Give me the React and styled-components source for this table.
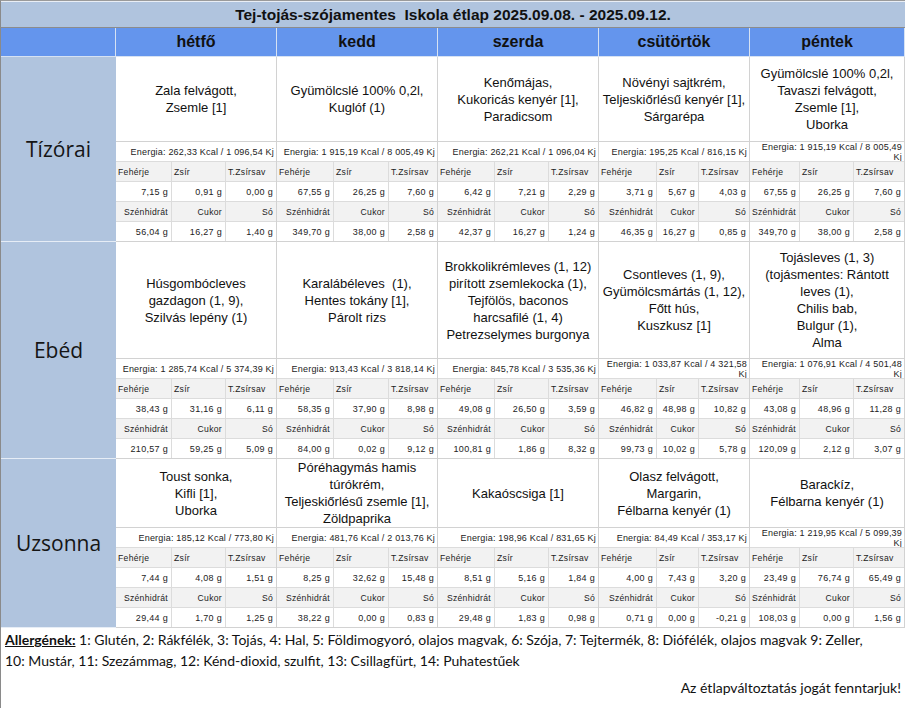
import React from "react";
import styled, { createGlobalStyle } from "styled-components";

const GlobalStyle = createGlobalStyle`
  html, body {
    margin: 0;
    padding: 0;
    background: #ffffff;
  }
  body {
    font-family: "Liberation Sans", Arial, sans-serif;
    color: #111;
  }
`;

const Page = styled.div`
  width: 905px;
  height: 708px;
  box-sizing: border-box;
  border-left: 1px solid #8a8a8a;
  border-top: 1px solid #9a9a9a;
  overflow: hidden;
`;

const Title = styled.div`
  height: 25px;
  line-height: 25px;
  border-top: 1px solid #e9eef5;
  border-bottom: 1px solid #8c8c8c;
  background: #b0c4de;
  text-align: center;
  font-weight: bold;
  font-size: 15.5px;
  white-space: pre;
`;

const Table = styled.div`
  display: grid;
  grid-template-columns: 115px 161px 161px 161px 151px 155px;
`;

const Corner = styled.div`
  height: 28px;
  background: #6495ed;
  border-right: 1px solid #d6e2f3;
  border-bottom: 1px solid #d6e2f3;
`;

const DayHead = styled.div`
  height: 28px;
  display: flex;
  align-items: center;
  justify-content: center;
  background: #6495ed;
  border-right: 1px solid #d6e2f3;
  border-bottom: 1px solid #d6e2f3;
  font-weight: bold;
  font-size: 16px;
  color: #111;
`;

const MealLabel = styled.div`
  display: flex;
  align-items: center;
  justify-content: center;
  background: #b0c4de;
  border-bottom: 1px solid #e6edf6;
  font-family: "Open Sans", "Noto Sans", sans-serif;
  font-size: 21px;
  color: #151515;
`;

const DayCell = styled.div`
  display: flex;
  flex-direction: column;
  border-right: 1px solid #d2d2d2;
  border-bottom: 1px solid #d2d2d2;
  background: #fff;
`;

const MealText = styled.div`
  height: ${(p) => p.$h}px;
  display: flex;
  align-items: center;
  justify-content: center;
  text-align: center;
  font-size: 13px;
  line-height: 17px;
  padding: 0 2px;
  white-space: pre;
  overflow: hidden;
`;

const Nutri = styled.div`
  display: grid;
  grid-template-columns: ${(p) => p.$cols};
  grid-auto-rows: 20px;
`;

const Energy = styled.div`
  grid-column: 1 / -1;
  box-sizing: border-box;
  border-top: 1px solid #d2d2d2;
  display: flex;
  align-items: center;
  justify-content: flex-end;
  padding: 0 2px 0 3px;
  overflow: hidden;
  font-size: 9px;
  letter-spacing: 0.2px;
  line-height: 10px;
  text-align: right;
  white-space: nowrap;
  color: #222;
`;

const NCell = styled.div`
  box-sizing: border-box;
  border-top: 1px solid #dcdcdc;
  border-right: ${(p) => (p.$last ? "none" : "1px solid #dcdcdc")};
  background: ${(p) => (p.$label ? "#f2f2f2" : "#ffffff")};
  display: flex;
  align-items: center;
  justify-content: ${(p) => (p.$left ? "flex-start" : "flex-end")};
  padding: 0 3px 0 2px;
  font-size: ${(p) => (p.$label ? "8.6px" : "9px")};
  letter-spacing: 0.3px;
  white-space: nowrap;
  color: #222;
`;

const Footer = styled.div`
  padding: 1px 4px 0 4px;
  font-family: "Lato", "Open Sans", sans-serif;
  font-size: 14px;
  line-height: 21px;
  color: #111;
`;

const AllergenHead = styled.span`
  font-weight: bold;
  text-decoration: underline;
`;

const Notice = styled.div`
  margin-top: 6px;
  text-align: right;
`;

const days = [
  { name: "hétfő", cols: "56px 54px 1fr" },
  { name: "kedd", cols: "57px 55px 1fr" },
  { name: "szerda", cols: "57px 54px 1fr" },
  { name: "csütörtök", cols: "58px 42px 1fr" },
  { name: "péntek", cols: "50px 54px 1fr" },
];

// wrap: the energy line does not fit its column and breaks before "Kj"
const meals = [
  {
    label: "Tízórai",
    h: 84,
    items: [
      {
        lines: ["Zala felvágott,", "Zsemle [1]"],
        energy: "Energia: 262,33 Kcal / 1 096,54 Kj",
        a: ["7,15 g", "0,91 g", "0,00 g"],
        b: ["56,04 g", "16,27 g", "1,40 g"],
      },
      {
        lines: ["Gyümölcslé 100% 0,2l,", "Kuglóf (1)"],
        energy: "Energia: 1 915,19 Kcal / 8 005,49 Kj",
        a: ["67,55 g", "26,25 g", "7,60 g"],
        b: ["349,70 g", "38,00 g", "2,58 g"],
      },
      {
        lines: ["Kenőmájas,", "Kukoricás kenyér [1],", "Paradicsom"],
        energy: "Energia: 262,21 Kcal / 1 096,04 Kj",
        a: ["6,42 g", "7,21 g", "2,29 g"],
        b: ["42,37 g", "16,27 g", "1,24 g"],
      },
      {
        lines: ["Növényi sajtkrém,", "Teljeskiőrlésű kenyér [1],", "Sárgarépa"],
        energy: "Energia: 195,25 Kcal / 816,15 Kj",
        a: ["3,71 g", "5,67 g", "4,03 g"],
        b: ["46,35 g", "16,27 g", "0,85 g"],
      },
      {
        lines: ["Gyümölcslé 100% 0,2l,", "Tavaszi felvágott,", "Zsemle [1],", "Uborka"],
        energy: "Energia: 1 915,19 Kcal / 8 005,49 Kj",
        wrap: true,
        a: ["67,55 g", "26,25 g", "7,60 g"],
        b: ["349,70 g", "38,00 g", "2,58 g"],
      },
    ],
  },
  {
    label: "Ebéd",
    h: 116,
    items: [
      {
        lines: ["Húsgombócleves", "gazdagon (1, 9),", "Szilvás lepény (1)"],
        energy: "Energia: 1 285,74 Kcal / 5 374,39 Kj",
        a: ["38,43 g", "31,16 g", "6,11 g"],
        b: ["210,57 g", "59,25 g", "5,09 g"],
      },
      {
        lines: ["Karalábéleves  (1),", "Hentes tokány [1],", "Párolt rizs"],
        energy: "Energia: 913,43 Kcal / 3 818,14 Kj",
        a: ["58,35 g", "37,90 g", "8,98 g"],
        b: ["84,00 g", "0,02 g", "9,12 g"],
      },
      {
        lines: [
          "Brokkolikrémleves (1, 12)",
          "pirított zsemlekocka (1),",
          "Tejfölös, baconos",
          "harcsafilé (1, 4)",
          "Petrezselymes burgonya",
        ],
        energy: "Energia: 845,78 Kcal / 3 535,36 Kj",
        a: ["49,08 g", "26,50 g", "3,59 g"],
        b: ["100,81 g", "1,86 g", "8,32 g"],
      },
      {
        lines: ["Csontleves (1, 9),", "Gyümölcsmártás (1, 12),", "Főtt hús,", "Kuszkusz [1]"],
        energy: "Energia: 1 033,87 Kcal / 4 321,58 Kj",
        wrap: true,
        a: ["46,82 g", "48,98 g", "10,82 g"],
        b: ["99,73 g", "10,02 g", "5,78 g"],
      },
      {
        lines: [
          "Tojásleves (1, 3)",
          "(tojásmentes: Rántott",
          "leves (1),",
          "Chilis bab,",
          "Bulgur (1),",
          "Alma",
        ],
        energy: "Energia: 1 076,91 Kcal / 4 501,48 Kj",
        wrap: true,
        a: ["43,08 g", "48,96 g", "11,28 g"],
        b: ["120,09 g", "2,12 g", "3,07 g"],
      },
    ],
  },
  {
    label: "Uzsonna",
    h: 68,
    items: [
      {
        lines: ["Toust sonka,", "Kifli [1],", "Uborka"],
        energy: "Energia: 185,12 Kcal / 773,80 Kj",
        a: ["7,44 g", "4,08 g", "1,51 g"],
        b: ["29,44 g", "1,70 g", "1,25 g"],
      },
      {
        lines: ["Póréhagymás hamis", "túrókrém,", "Teljeskiőrlésű zsemle [1],", "Zöldpaprika"],
        energy: "Energia: 481,76 Kcal / 2 013,76 Kj",
        a: ["8,25 g", "32,62 g", "15,48 g"],
        b: ["38,22 g", "0,00 g", "0,83 g"],
      },
      {
        lines: ["Kakaóscsiga [1]"],
        energy: "Energia: 198,96 Kcal / 831,65 Kj",
        a: ["8,51 g", "5,16 g", "1,84 g"],
        b: ["29,48 g", "1,83 g", "0,98 g"],
      },
      {
        lines: ["Olasz felvágott,", "Margarin,", "Félbarna kenyér (1)"],
        energy: "Energia: 84,49 Kcal / 353,17 Kj",
        a: ["4,00 g", "7,43 g", "3,20 g"],
        b: ["0,71 g", "0,00 g", "-0,21 g"],
      },
      {
        lines: ["Barackíz,", "Félbarna kenyér (1)"],
        energy: "Energia: 1 219,95 Kcal / 5 099,39 Kj",
        wrap: true,
        a: ["23,49 g", "76,74 g", "65,49 g"],
        b: ["108,03 g", "0,00 g", "1,56 g"],
      },
    ],
  },
];

const topLabels = ["Fehérje", "Zsír", "T.Zsírsav"];
const bottomLabels = ["Szénhidrát", "Cukor", "Só"];

const NutriRow = ({ values, label, left }) =>
  values.map((v, i) => (
    <NCell key={v + i} $label={label} $left={left} $last={i === 2}>
      {v}
    </NCell>
  ));

const EnergyText = ({ text, wrap }) => {
  if (!wrap) return <span>{text}</span>;
  const cut = text.lastIndexOf(" ");
  return (
    <span>
      {text.slice(0, cut)}
      <br />
      {text.slice(cut + 1)}
    </span>
  );
};

const Day = ({ item, cols, h }) => (
  <DayCell>
    <MealText $h={h}>
      <div>
        {item.lines.map((l, i) => (
          <React.Fragment key={i}>
            {i > 0 && <br />}
            {l}
          </React.Fragment>
        ))}
      </div>
    </MealText>
    <Nutri $cols={cols}>
      <Energy>
        <EnergyText text={item.energy} wrap={item.wrap} />
      </Energy>
      <NutriRow values={topLabels} label left />
      <NutriRow values={item.a} />
      <NutriRow values={bottomLabels} label />
      <NutriRow values={item.b} />
    </Nutri>
  </DayCell>
);

const App = () => (
  <>
    <GlobalStyle />
    <Page>
      <Title>Tej-tojás-szójamentes  Iskola étlap 2025.09.08. - 2025.09.12.</Title>
      <Table>
        <Corner />
        {days.map((d) => (
          <DayHead key={d.name}>{d.name}</DayHead>
        ))}
        {meals.map((m) => (
          <React.Fragment key={m.label}>
            <MealLabel>{m.label}</MealLabel>
            {m.items.map((it, i) => (
              <Day key={i} item={it} cols={days[i].cols} h={m.h} />
            ))}
          </React.Fragment>
        ))}
      </Table>
      <Footer>
        <div>
          <AllergenHead>Allergének:</AllergenHead> 1: Glutén, 2: Rákfélék, 3: Tojás, 4: Hal, 5:
          Földimogyoró, olajos magvak, 6: Szója, 7: Tejtermék, 8: Diófélék, olajos magvak 9: Zeller,
          <br />
          10: Mustár, 11: Szezámmag, 12: Kénd-dioxid, szulfit, 13: Csillagfürt, 14: Puhatestűek
        </div>
        <Notice>Az étlapváltoztatás jogát fenntarjuk!</Notice>
      </Footer>
    </Page>
  </>
);

export default App;
